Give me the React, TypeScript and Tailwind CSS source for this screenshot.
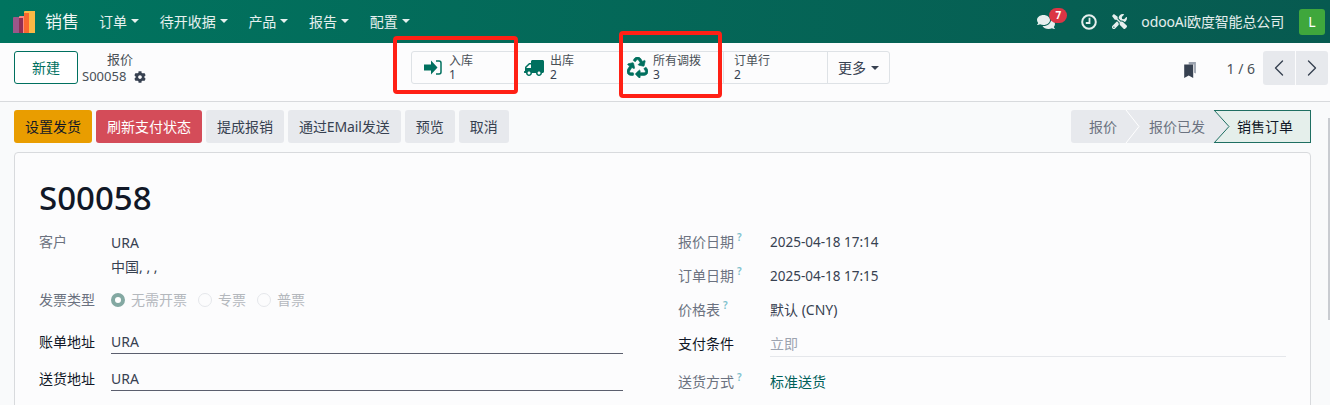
import { FaCog, FaComments, FaRecycle, FaTools, FaTruck } from 'react-icons/fa'
import { LuChevronLeft, LuChevronRight } from 'react-icons/lu'

const font = { fontFamily: '"Noto Sans", "Noto Sans CJK SC", sans-serif' }

function Caret() {
  return <span className="inline-block w-0 h-0 border-x-[4px] border-x-transparent border-t-[4px] border-t-current" />
}

function Logo() {
  return (
    <svg width="22" height="22" viewBox="0 0 22 22" className="shrink-0">
      <path d="M11 1 a1 1 0 0 1 1 -1 H22 V22 H11 Z" fill="#fbb945" />
      <path d="M11 2 H16 V22 H11 Z" fill="#f9682f" />
      <path d="M6 6 a1 1 0 0 1 1 -1 H11 V22 H6 Z" fill="#f98a85" />
      <path d="M0 7 a1 1 0 0 1 1 -1 H6 V22 H0 Z" fill="#9c5789" />
      <path d="M6 7 H10 V22 H6 Z" fill="#8f2f55" />
    </svg>
  )
}

function TopMenu({ label }: { label: string }) {
  return (
    <div className="flex items-center gap-[4px] text-[14px] text-white/90">
      {label}
      <Caret />
    </div>
  )
}

function StatButton({ icon, label, value, className }: { icon?: React.ReactNode; label: string; value: string; className: string }) {
  return (
    <div className={`flex items-center h-full border-r border-[#dee2e6] ${className}`}>
      {icon}
      <div className="text-[12px] leading-[14px] text-[#495057]">
        <div>{label}</div>
        <div className="text-[#374151]">{value}</div>
      </div>
    </div>
  )
}

function ActionButton({ children, className = 'bg-[#e7e9ed] text-[#374151]' }: { children: React.ReactNode; className?: string }) {
  return <div className={`h-[33px] px-[11px] flex items-center rounded-[3px] text-[14px] ${className}`}>{children}</div>
}

function FieldRow({ label, help, strong, children, h, labelW }: { label: string; help?: boolean; strong?: boolean; children: React.ReactNode; h: string; labelW: string }) {
  return (
    <div className={`flex ${h}`}>
      <div className={`shrink-0 text-[14px] leading-[20px] ${labelW} ${strong ? 'text-[#111827]' : 'text-[#6b7280]'}`}>
        {label}
        {help && <span className="text-[10px] font-semibold text-[#7cc0cc] ml-[3px] relative -top-[6px]">?</span>}
      </div>
      <div className="flex-1 text-[14px] leading-[20px] text-[#374151]">{children}</div>
    </div>
  )
}

function Radio({ label, on }: { label: string; on?: boolean }) {
  return (
    <div className="flex items-center gap-[6px] text-[#b4b8bd]">
      <span className={`w-[14px] h-[14px] rounded-full ${on ? 'border-[4px] border-[#83a8a2] bg-white' : 'border border-[#e5e7eb]'}`} />
      {label}
    </div>
  )
}

export default function App() {
  return (
    <div className="w-[1330px] h-[405px] overflow-hidden bg-[#f9fafb] relative" style={font}>
      {/* navbar */}
      <div className="h-[43px] bg-gradient-to-r from-[#00745f] to-[#075a50] flex items-center pl-[13px] pr-[5px]">
        <Logo />
        <div className="text-[17px] text-white/95 ml-[10px] mr-[20px]">销售</div>
        <div className="flex gap-[20.7px] -mt-[1px]">
          <TopMenu label="订单" />
          <TopMenu label="待开收据" />
          <TopMenu label="产品" />
          <TopMenu label="报告" />
          <TopMenu label="配置" />
        </div>
        <div className="ml-auto flex items-center text-white/90">
          <div className="relative mr-[26px]">
            <FaComments size={18} />
            <span className="absolute -top-[5px] left-[12px] w-[18px] h-[15px] rounded-full bg-[#dc3545] text-white text-[10px] font-bold leading-[15px] text-center">7</span>
          </div>
          <svg width="16" height="16" viewBox="0 0 16 16" className="mr-[15px]" fill="none" stroke="currentColor">
            <circle cx="8" cy="8" r="6.8" strokeWidth="2" />
            <path d="M8.5 3.8 V9 H4.8" strokeWidth="1.8" />
          </svg>
          <FaTools size={15} className="mr-[14px]" />
          <div className="text-[14px] tracking-[-0.15px] mr-[15px]">odooAi欧度智能总公司</div>
          <div className="w-[26px] h-[26px] rounded-[3px] bg-[#3fa73c] text-white text-[14px] flex items-center justify-center">L</div>
        </div>
      </div>

      {/* control panel */}
      <div className="bg-[#fcfcfd] border-b border-[#d8dadd] h-[59px] flex items-start pt-[8px] pl-[14px] pr-[2px]">
        <div className="w-[64px] h-[33px] border border-[#00705f] rounded-[3px] flex items-center justify-center text-[14px] text-[#00705f] bg-white">新建</div>
        <div className="ml-[4px] w-[329px] text-[13px] leading-[17px] text-[#495057]">
          <div className="pl-[25px]">报价</div>
          <div className="flex items-center gap-[8px]">
            S00058
            <FaCog size={12} className="text-[#374151]" />
          </div>
        </div>
        <div className="flex items-center w-[479px] h-[33px] border border-[#dee2e6] rounded-[3px]">
          <StatButton
            className="w-[104px] pl-[12px]"
            icon={
              <svg width="18" height="15" viewBox="0 0 18 15" className="mr-[7px] text-[#00705f]">
                <path d="M0 4.5 H7 V0.5 L13.5 7.5 L7 14.5 V10.5 H0 Z" fill="currentColor" />
                <path d="M12 1 H15 a2 2 0 0 1 2 2 V12 a2 2 0 0 1 -2 2 H12" fill="none" stroke="currentColor" strokeWidth="1.5" />
              </svg>
            }
            label="入库"
            value="1"
          />
          <StatButton className="w-[104px] pl-[8px]" icon={<FaTruck size={20} className="mr-[6px] text-[#00705f] -scale-x-100" />} label="出库" value="2" />
          <StatButton
            className="w-[104px] pl-[7px]"
            icon={<FaRecycle size={21} stroke="currentColor" strokeWidth={16} className="mr-[5px] text-[#00705f]" />}
            label="所有调拨"
            value="3"
          />
          <StatButton className="w-[104px] pl-[10px]" label="订单行" value="2" />
          <div className="flex-1 flex items-center pl-[10px] gap-[5px] text-[14px] text-[#374151]">
            更多
            <Caret />
          </div>
        </div>
        <div className="ml-auto flex items-center h-[34px]">
          <svg width="13" height="18" viewBox="0 0 14 20" className="mr-[29px] mt-[3px]">
            <path d="M5 1 H13 V14 L11 13 V4 H5 Z" fill="#9ca3af" />
            <path d="M0 4 H10 V19 L5 16 L0 19 Z" fill="#374151" />
          </svg>
          <div className="text-[14px] text-[#495057] mr-[8px]">1 / 6</div>
          <div className="flex gap-[1px]">
            <div className="w-[32px] h-[34px] bg-[#e7e9ed] rounded-l-[3px] flex items-center justify-center text-[#374151]">
              <LuChevronLeft size={28} strokeWidth={1.2} />
            </div>
            <div className="w-[32px] h-[34px] bg-[#e7e9ed] rounded-r-[3px] flex items-center justify-center text-[#374151]">
              <LuChevronRight size={28} strokeWidth={1.2} />
            </div>
          </div>
        </div>
      </div>

      {/* actions and status */}
      <div className="flex items-center h-[33px] mt-[8px] pl-[14px] pr-[19px] gap-[4px]">
        <ActionButton className="bg-[#e99d00] text-[#111827]">设置发货</ActionButton>
        <ActionButton className="bg-[#d44c59] text-white">刷新支付状态</ActionButton>
        <ActionButton>提成报销</ActionButton>
        <ActionButton className="bg-[#e7e9ed] text-[#374151] tracking-[-0.1px]">通过EMail发送</ActionButton>
        <ActionButton>预览</ActionButton>
        <ActionButton>取消</ActionButton>
        <div className="ml-auto flex h-[33px] text-[14px] relative">
          <div className="w-[55px] bg-[#e7e9ed] text-[#6b7280] flex items-center pl-[18px] rounded-l-[3px]">报价</div>
          <div className="w-[88px] bg-[#e7e9ed] text-[#6b7280] flex items-center pl-[23px]">报价已发</div>
          <div className="w-[97px] bg-[#e5efeb] text-[#111827] flex items-center pl-[23px] border-y border-r border-[#1f6f62]">销售订单</div>
          <svg width="240" height="33" viewBox="0 0 240 33" className="absolute left-0 top-0 pointer-events-none">
            <path d="M55 0 L68 16.5 L55 33" fill="none" stroke="#ffffff" strokeWidth="1" />
            <path d="M143 0 L158 16.5 L143 33 Z" fill="#e7e9ed" />
            <path d="M143 0 L158 16.5 L143 33" fill="none" stroke="#1f6f62" strokeWidth="1" />
          </svg>
        </div>
      </div>

      {/* form sheet */}
      <div className="mx-[14px] w-[1297px] mt-[9px] bg-[#fcfcfd] border border-[#d8dadd] rounded-[4px] h-[300px] px-[24px] pt-[23px]">
        <div className="text-[33px] leading-[44px] font-medium text-[#111827] mb-[12px]">S00058</div>
        <div className="flex">
          <div className="w-[584px] shrink-0">
            <FieldRow label="客户" labelW="w-[72px]" h="h-[58px]">
              <div className="mt-[1px]">URA</div>
              <div className="mt-[4px]">中国, , ,</div>
            </FieldRow>
            <FieldRow label="发票类型" labelW="w-[72px]" h="h-[42px]">
              <div className="flex gap-[11px] items-center h-[20px]">
                <Radio label="无需开票" on />
                <Radio label="专票" />
                <Radio label="普票" />
              </div>
            </FieldRow>
            <FieldRow label="账单地址" labelW="w-[72px]" strong h="h-[37px]">
              <div className="border-b border-[#5b5f6e] h-[22px]">URA</div>
            </FieldRow>
            <FieldRow label="送货地址" labelW="w-[72px]" strong h="h-[37px]">
              <div className="border-b border-[#5b5f6e] h-[22px]">URA</div>
            </FieldRow>
          </div>
          <div className="w-[608px] ml-[55px]">
            <FieldRow label="报价日期" labelW="w-[92px]" help h="h-[34px]">
              <span className="text-[13.5px]">2025-04-18 17:14</span>
            </FieldRow>
            <FieldRow label="订单日期" labelW="w-[92px]" help h="h-[34px]">
              <span className="text-[13.5px]">2025-04-18 17:15</span>
            </FieldRow>
            <FieldRow label="价格表" labelW="w-[92px]" help h="h-[34px]">默认 (CNY)</FieldRow>
            <FieldRow label="支付条件" labelW="w-[92px]" strong h="h-[38px]">
              <div className="border-b border-[#e5e7eb] h-[23px] text-[#9ca3af]">立即</div>
            </FieldRow>
            <FieldRow label="送货方式" labelW="w-[92px]" help h="h-[30px]">
              <span className="text-[#00605a]">标准送货</span>
            </FieldRow>
          </div>
        </div>
      </div>

      {/* scrollbar thumb */}
      <div className="absolute right-0 top-[118px] w-[2px] h-[202px] bg-[#c9ccd1]" />

      {/* red annotation boxes */}
      <div className="absolute left-[393px] top-[36px] w-[125px] h-[58px] border-[4px] border-[#ff2015] rounded-[4px]" />
      <div className="absolute left-[619px] top-[31px] w-[103px] h-[67px] border-[4px] border-[#ff2015] rounded-[4px]" />
    </div>
  )
}
